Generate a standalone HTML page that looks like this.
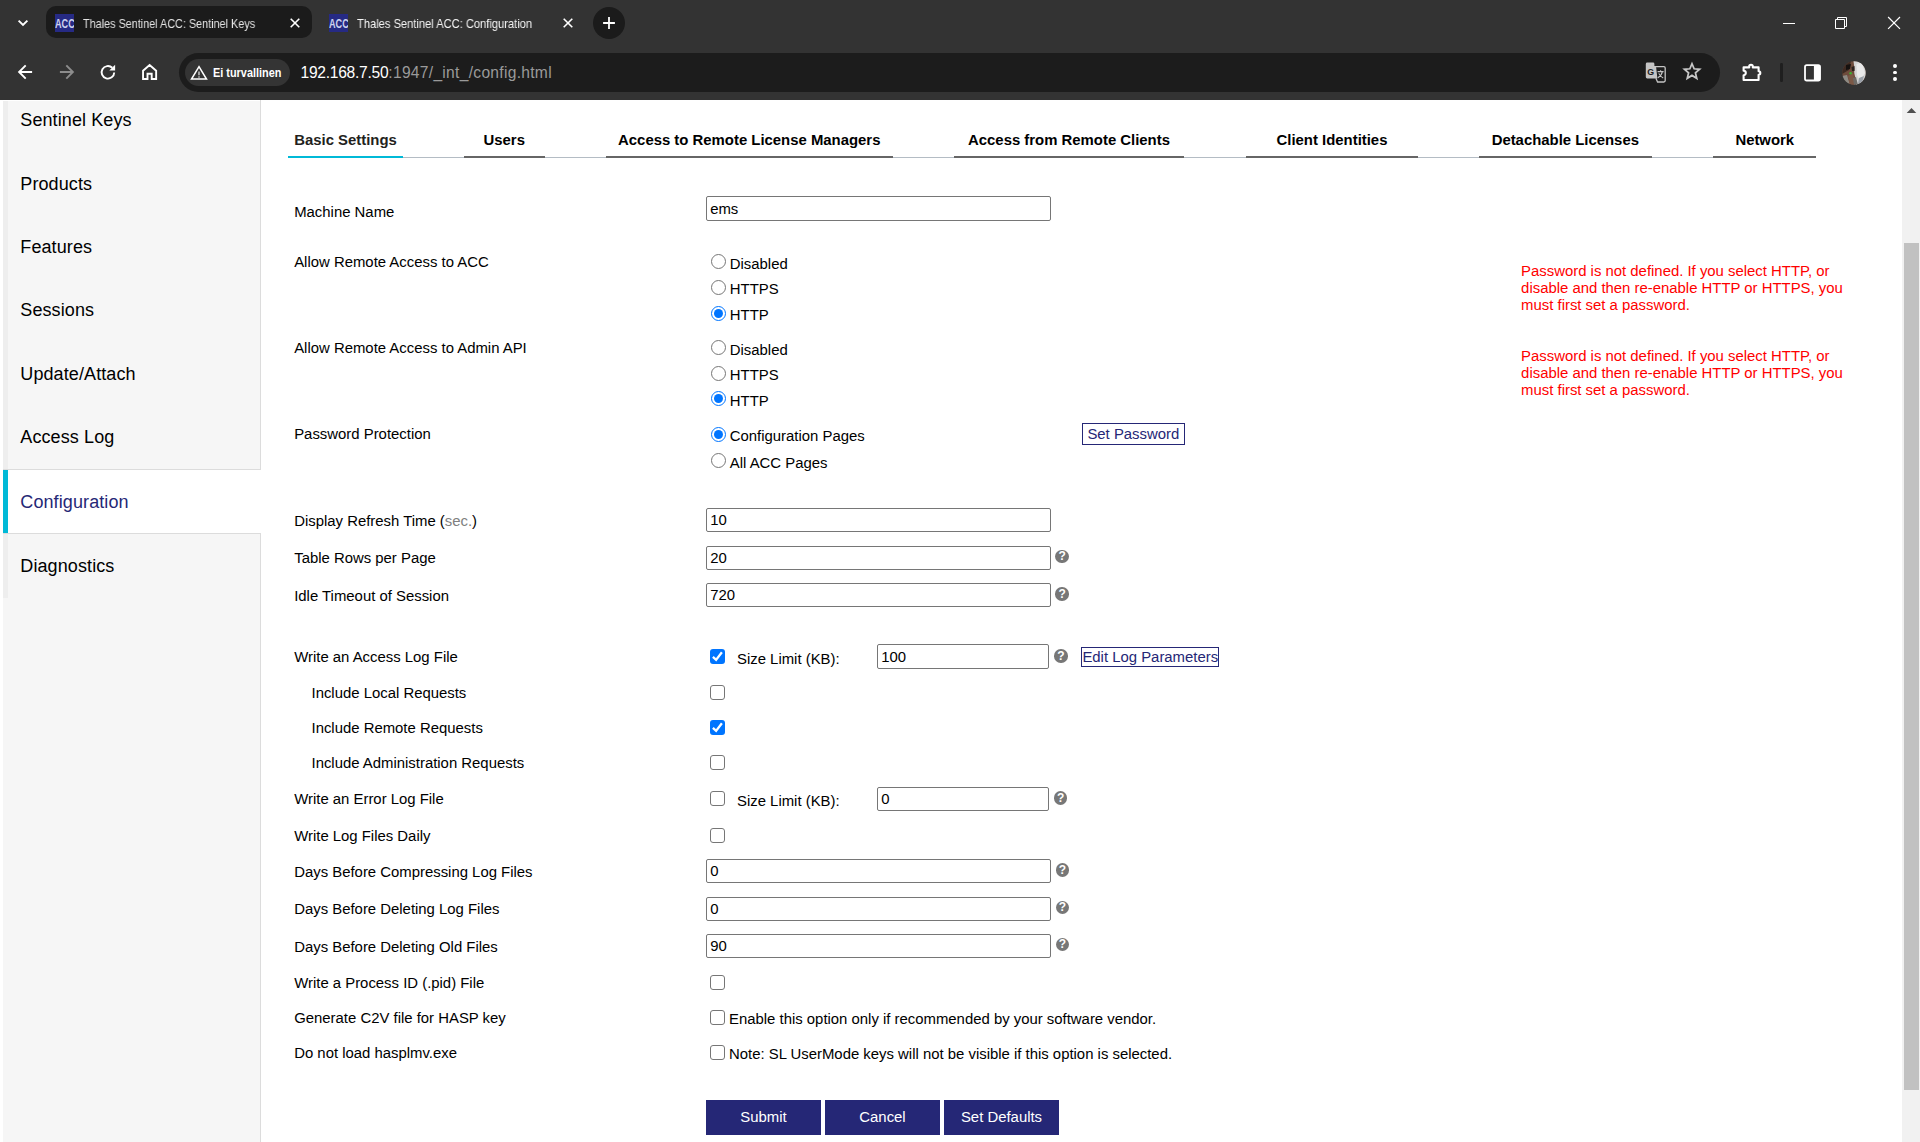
<!DOCTYPE html>
<html lang="en"><head><meta charset="utf-8"><title>Thales Sentinel ACC: Configuration</title>
<style>
html,body{margin:0;padding:0;}
body{width:1920px;height:1142px;overflow:hidden;position:relative;background:#fff;font-family:"Liberation Sans",sans-serif;}
.a{position:absolute;box-sizing:border-box;}
.t{position:absolute;white-space:nowrap;line-height:20px;}
svg{position:absolute;overflow:visible;}
.inp{position:absolute;box-sizing:border-box;border:1px solid #767676;border-radius:2px;background:#fff;}
.cb{position:absolute;box-sizing:border-box;width:15px;height:15px;border:1.3px solid #767676;border-radius:3px;background:#fff;}
.cb.on{border:none;background:#0075ff;}
.rd{position:absolute;box-sizing:border-box;width:15px;height:15px;border:1.3px solid #767676;border-radius:50%;background:#fff;}
.rd.on{border:1.5px solid #0075ff;}
.rd.on::after{content:"";position:absolute;left:50%;top:50%;width:9px;height:9px;margin:-4.5px 0 0 -4.5px;border-radius:50%;background:#0075ff;}
.help{position:absolute;width:13.5px;height:13.5px;border-radius:50%;background:#777;}
.btn{position:absolute;box-sizing:border-box;background:#252776;}
.lbtn{position:absolute;box-sizing:border-box;border:1px solid #252776;background:#fff;}

</style></head>
<body>
<div class="a" style="left:0px;top:0px;width:1920px;height:100px;background:#333333;"></div>
<svg style="left:15px;top:15px" width="16" height="16" viewBox="0 0 16 16"><path d="M3.6 5.6 L8 10 L12.4 5.6" fill="none" stroke="#fff" stroke-width="1.9"/></svg>
<div class="a" style="left:46px;top:6px;width:266px;height:32px;background:#1b1b1b;border-radius:10px;"></div>
<div class="a" style="left:55px;top:14px;width:19px;height:18px;background:#262a84;overflow:hidden;"></div>
<div class="a" style="left:55px;top:14px;width:19px;height:18px;overflow:hidden;"><div class="t" style="left:-0.4px;top:-0.26px;font-size:12px;font-weight:bold;color:#ccd1ee;transform:scaleX(0.76);transform-origin:0 0;">ACC</div></div>
<div class="t " style="left:83.4px;top:13.50px;font-size:13px;color:#e4e4e4;transform:scaleX(0.8326);transform-origin:0 0;will-change:transform;">Thales Sentinel ACC: Sentinel Keys</div>
<svg style="left:286.6px;top:15.2px" width="16" height="16" viewBox="0 0 16 16"><path d="M3.7 3.7 L12.3 12.3 M12.3 3.7 L3.7 12.3" fill="none" stroke="#fff" stroke-width="1.6"/></svg>
<div class="a" style="left:329px;top:14px;width:19px;height:18px;background:#262a84;overflow:hidden;"></div>
<div class="a" style="left:329px;top:14px;width:19px;height:18px;overflow:hidden;"><div class="t" style="left:-0.4px;top:-0.26px;font-size:12px;font-weight:bold;color:#ccd1ee;transform:scaleX(0.76);transform-origin:0 0;">ACC</div></div>
<div class="t " style="left:357.2px;top:13.50px;font-size:13px;color:#f6f6f6;transform:scaleX(0.856);transform-origin:0 0;will-change:transform;">Thales Sentinel ACC: Configuration</div>
<svg style="left:560.2px;top:15.2px" width="16" height="16" viewBox="0 0 16 16"><path d="M3.7 3.7 L12.3 12.3 M12.3 3.7 L3.7 12.3" fill="none" stroke="#fff" stroke-width="1.6"/></svg>
<div class="a" style="left:593px;top:7px;width:32px;height:32px;background:#1b1b1b;border-radius:50%;"></div>
<svg style="left:601px;top:15px" width="16" height="16" viewBox="0 0 16 16"><path d="M2.1 8 H13.9 M8 2.1 V13.9" fill="none" stroke="#fff" stroke-width="1.8"/></svg>
<div class="a" style="left:1783.2px;top:22.5px;width:11.8px;height:1.2px;background:#fff;"></div>
<svg style="left:1833px;top:15px" width="16" height="16" viewBox="0 0 16 16"><path d="M2.5 4.5 H11.5 V13.5 H2.5 Z" fill="none" stroke="#fff" stroke-width="1"/><path d="M4.5 4 V2.5 H13.5 V11.5 H12" fill="none" stroke="#fff" stroke-width="1"/></svg>
<svg style="left:1886px;top:15px" width="16" height="16" viewBox="0 0 16 16"><path d="M2.1 2 L14 13.9 M14 2 L2.1 13.9" fill="none" stroke="#fff" stroke-width="1.2"/></svg>
<svg style="left:15.2px;top:62.400000000000006px" width="20" height="20" viewBox="0 0 20 20"><g><path d="M17.1 10 H4.8 M10.7 3.4 L4.1 10 L10.7 16.6" fill="none" stroke="#fff" stroke-width="1.9"/></g></svg>
<svg style="left:56.7px;top:62.400000000000006px" width="20" height="20" viewBox="0 0 20 20"><g transform="translate(20 0) scale(-1 1)"><path d="M17.1 10 H4.8 M10.7 3.4 L4.1 10 L10.7 16.6" fill="none" stroke="#8c8c8c" stroke-width="1.9"/></g></svg>
<svg style="left:98px;top:62px" width="20" height="20" viewBox="0 0 20 20"><path d="M16.2 10.4 A6.3 6.3 0 1 1 14.3 5.8" fill="none" stroke="#fff" stroke-width="1.9"/><path d="M17.1 2.8 V8.6 H11.3 Z" fill="#fff"/></svg>
<svg style="left:139px;top:62px" width="20" height="20" viewBox="0 0 20 20"><path d="M4.05 17.05 V8.7 L10.6 3.1 L17.15 8.7 V17.05 H12.7 V11.75 H8.5 V17.05 Z" fill="none" stroke="#fff" stroke-width="1.9" stroke-linejoin="miter"/></svg>
<div class="a" style="left:179px;top:53px;width:1541px;height:39px;background:#1c1c1c;border-radius:19.5px;"></div>
<div class="a" style="left:185px;top:59px;width:105.3px;height:27px;background:#343434;border-radius:13.5px;"></div>
<svg style="left:188.6px;top:63px" width="20" height="20" viewBox="0 0 20 20"><path d="M10 3.7 L17.5 16.1 H2.5 Z" fill="none" stroke="#fff" stroke-width="1.5" stroke-linejoin="miter"/><path d="M10 8.4 V12.3" stroke="#fff" stroke-width="1.1"/><circle cx="10" cy="14" r="0.7" fill="#fff"/></svg>
<div class="t " style="left:212.8px;top:62.67px;font-size:12.5px;color:#fff;font-weight:bold;transform:scaleX(0.872);transform-origin:0 0;">Ei turvallinen</div>
<div class="t " style="left:300.5px;top:62.59px;font-size:15.6px;color:#fff;"><span style="letter-spacing:-0.27px">192.168.7.50</span><span style="color:#9a9a9a;letter-spacing:0.29px">:1947/_int_/config.html</span></div>
<svg style="left:1645px;top:62px" width="21" height="21" viewBox="0 0 21 21"><path d="M2.2 0.6 H8 a1.4 1.4 0 0 1 1.4 1.4 V4 H11 L12.4 16.4 H2.2 a1.4 1.4 0 0 1 -1.4 -1.4 V2 a1.4 1.4 0 0 1 1.4 -1.4 Z" fill="#c4c4c4"/><path d="M10.2 4.6 H18.8 a1.4 1.4 0 0 1 1.4 1.4 V18.6 a1.4 1.4 0 0 1 -1.4 1.4 H12.6 L10.9 16.2" fill="none" stroke="#c4c4c4" stroke-width="1.3"/><text x="2.2" y="12.7" font-family="Liberation Sans" font-weight="bold" font-size="8.8" fill="#1c1c1c">G</text><path d="M12.6 9.6 H18.6 M15.6 8.2 V9.6 M17.4 9.6 C16.8 12.4 15.2 14.4 12.8 15.8 M13.8 11.4 C14.6 13.4 16.2 15 18.2 16" fill="none" stroke="#c4c4c4" stroke-width="1.1"/></svg>
<svg style="left:1682.1px;top:61.4px" width="20" height="20" viewBox="0 0 20 20"><path transform="translate(10 10.3) scale(0.93) translate(-10 -10.3)" d="M10 2.2 L12.3 7.6 L18.2 8.1 L13.7 12 L15.1 17.8 L10 14.7 L4.9 17.8 L6.3 12 L1.8 8.1 L7.7 7.6 Z" fill="none" stroke="#c7c7c7" stroke-width="1.9" stroke-linejoin="miter"/></svg>
<svg style="left:1740.5px;top:61.5px" width="21" height="21" viewBox="0 0 21 21"><path d="M2.6 5.4 H8.2 V4.5 a1.8 1.8 0 0 1 3.6 0 V5.4 H17.6 V9.3 a1.7 1.7 0 0 1 0 3.4 V18 H2.6 V13.2 a2.2 2.2 0 0 0 0 -4.4 Z" fill="none" stroke="#fff" stroke-width="2.1" stroke-linejoin="round"/></svg>
<div class="a" style="left:1780px;top:63px;width:2.5px;height:18.6px;background:#1f1f1f;border-radius:1.25px;"></div>
<svg style="left:1802px;top:62.5px" width="20" height="20" viewBox="0 0 20 20"><rect x="3" y="2.15" width="15" height="15.35" rx="1.8" fill="none" stroke="#fff" stroke-width="1.8"/><rect x="11.9" y="2.6" width="6.4" height="14.4" fill="#fff"/></svg>
<svg style="left:1841.5px;top:60.5px" width="24" height="24" viewBox="0 0 24 24"><defs><clipPath id="av"><circle cx="12" cy="12" r="11.7"/></clipPath></defs><g clip-path="url(#av)"><rect width="24" height="24" fill="#6e4c3c"/><path d="M11.5 0 H24 V24 H14 C15.5 18 11 14 12.5 8 Z" fill="#d4d4d4"/><path d="M0 0 H9 L7 9 L0 13 Z" fill="#3d2a22"/><path d="M4 4 L9 3 L8 8 L4 9 Z" fill="#15110f"/><path d="M9.5 6 L12.5 5 L12.5 10 L10 10 Z" fill="#2a211d"/><path d="M0 15 L5 14 L8 24 H0 Z" fill="#8d8a84"/><path d="M6 15 L11 12 L13 24 H8 Z" fill="#7b5846"/><path d="M11 17 L14 16 L16 24 H12 Z" fill="#6c6a66"/><circle cx="8.6" cy="12.2" r="1.3" fill="#3fae2f"/><path d="M14.5 3 L20 1.5 L23 12 L18 20 L15 14 Z" fill="#e9e9e9"/><path d="M17 17 L22 15 L20 22 L16 23 Z" fill="#9aa0a8"/></g></svg>
<div class="a" style="left:1893.1px;top:64.39999999999999px;width:3.8px;height:3.8px;background:#fff;border-radius:50%;"></div>
<div class="a" style="left:1893.1px;top:70.6px;width:3.8px;height:3.8px;background:#fff;border-radius:50%;"></div>
<div class="a" style="left:1893.1px;top:76.8px;width:3.8px;height:3.8px;background:#fff;border-radius:50%;"></div>
<div class="a" style="left:3px;top:101px;width:258px;height:1041px;background:#f6f6f6;border-right:1px solid #dcdcdc;"></div>
<div class="a" style="left:3px;top:101px;width:5px;height:497px;background:#eeeeee;"></div>
<div class="a" style="left:260px;top:100px;width:1px;height:1px;background:#dcdcdc;"></div>
<div class="a" style="left:3px;top:469px;width:258px;height:65px;background:#fff;border-top:1px solid #dcdcdc;border-bottom:1px solid #dcdcdc;"></div>
<div class="a" style="left:3px;top:470px;width:5px;height:63px;background:#00b9d7;"></div>
<div class="t " style="left:20.3px;top:109.76px;font-size:18px;color:#000;letter-spacing:0.1px;">Sentinel Keys</div>
<div class="t " style="left:20.3px;top:173.76px;font-size:18px;color:#000;letter-spacing:0.1px;">Products</div>
<div class="t " style="left:20.3px;top:236.76px;font-size:18px;color:#000;letter-spacing:0.1px;">Features</div>
<div class="t " style="left:20.3px;top:299.76px;font-size:18px;color:#000;letter-spacing:0.1px;">Sessions</div>
<div class="t " style="left:20.3px;top:363.76px;font-size:18px;color:#000;letter-spacing:0.1px;">Update/Attach</div>
<div class="t " style="left:20.3px;top:426.76px;font-size:18px;color:#000;letter-spacing:0.1px;">Access Log</div>
<div class="t " style="left:20.3px;top:491.76px;font-size:18px;color:#252776;letter-spacing:0.1px;">Configuration</div>
<div class="t " style="left:20.3px;top:555.76px;font-size:18px;color:#000;letter-spacing:0.1px;">Diagnostics</div>
<div class="a" style="left:288px;top:157px;width:1528px;height:1px;background:#b4bcc4;"></div>
<div class="a" style="left:288px;top:156px;width:115px;height:2px;background:#00b9d7;"></div>
<div class="t" style="left:145.5px;width:400px;text-align:center;top:129.80px;font-size:14.9px;font-weight:bold;color:#231f20;">Basic Settings</div>
<div class="a" style="left:464px;top:156px;width:81px;height:2px;background:#666666;"></div>
<div class="t" style="left:304.25px;width:400px;text-align:center;top:129.80px;font-size:14.9px;font-weight:bold;color:#000;">Users</div>
<div class="a" style="left:606px;top:156px;width:287px;height:2px;background:#666666;"></div>
<div class="t" style="left:549.25px;width:400px;text-align:center;top:129.80px;font-size:14.9px;font-weight:bold;color:#000;">Access to Remote License Managers</div>
<div class="a" style="left:954px;top:156px;width:230px;height:2px;background:#666666;"></div>
<div class="t" style="left:869.0px;width:400px;text-align:center;top:129.80px;font-size:14.9px;font-weight:bold;color:#000;">Access from Remote Clients</div>
<div class="a" style="left:1246px;top:156px;width:172px;height:2px;background:#666666;"></div>
<div class="t" style="left:1132.0px;width:400px;text-align:center;top:129.80px;font-size:14.9px;font-weight:bold;color:#000;">Client Identities</div>
<div class="a" style="left:1479px;top:156px;width:173px;height:2px;background:#666666;"></div>
<div class="t" style="left:1365.3px;width:400px;text-align:center;top:129.80px;font-size:14.9px;font-weight:bold;color:#000;">Detachable Licenses</div>
<div class="a" style="left:1713px;top:156px;width:103px;height:2px;background:#666666;"></div>
<div class="t" style="left:1564.75px;width:400px;text-align:center;top:129.80px;font-size:14.9px;font-weight:bold;color:#000;">Network</div>
<div class="t " style="left:294.2px;top:201.84px;font-size:14.9px;color:#000;">Machine Name</div>
<div class="inp" style="left:706px;top:196px;width:345px;height:25px;"></div>
<div class="t " style="left:710.2px;top:198.84px;font-size:14.9px;color:#000;">ems</div>
<div class="t " style="left:294.2px;top:251.84px;font-size:14.9px;color:#000;">Allow Remote Access to ACC</div>
<div class="rd" style="left:711px;top:254px;"></div>
<div class="t " style="left:729.8px;top:253.84px;font-size:14.9px;color:#000;">Disabled</div>
<div class="rd" style="left:711px;top:280px;"></div>
<div class="t " style="left:729.8px;top:278.84px;font-size:14.9px;color:#000;">HTTPS</div>
<div class="rd on" style="left:711px;top:305.6px;"></div>
<div class="t " style="left:729.8px;top:304.84px;font-size:14.9px;color:#000;">HTTP</div>
<div class="t " style="left:294.2px;top:337.84px;font-size:14.9px;color:#000;">Allow Remote Access to Admin API</div>
<div class="rd" style="left:711px;top:340px;"></div>
<div class="t " style="left:729.8px;top:339.84px;font-size:14.9px;color:#000;">Disabled</div>
<div class="rd" style="left:711px;top:366px;"></div>
<div class="t " style="left:729.8px;top:364.84px;font-size:14.9px;color:#000;">HTTPS</div>
<div class="rd on" style="left:711px;top:391px;"></div>
<div class="t " style="left:729.8px;top:390.84px;font-size:14.9px;color:#000;">HTTP</div>
<div class="t " style="left:294.2px;top:423.84px;font-size:14.9px;color:#000;">Password Protection</div>
<div class="rd on" style="left:711px;top:427px;"></div>
<div class="t " style="left:729.8px;top:425.84px;font-size:14.9px;color:#000;">Configuration Pages</div>
<div class="rd" style="left:711px;top:453px;"></div>
<div class="t " style="left:729.8px;top:452.84px;font-size:14.9px;color:#000;">All ACC Pages</div>
<div class="lbtn" style="left:1082px;top:423px;width:103px;height:22px;"></div>
<div class="t " style="left:1087.4px;top:423.84px;font-size:14.9px;color:#252776;">Set Password</div>
<div class="t " style="left:1521.1px;top:260.84px;font-size:14.9px;color:#ff0000;">Password is not defined. If you select HTTP, or</div>
<div class="t " style="left:1521.1px;top:277.84px;font-size:14.9px;color:#ff0000;">disable and then re-enable HTTP or HTTPS, you</div>
<div class="t " style="left:1521.1px;top:294.84px;font-size:14.9px;color:#ff0000;">must first set a password.</div>
<div class="t " style="left:1521.1px;top:345.84px;font-size:14.9px;color:#ff0000;">Password is not defined. If you select HTTP, or</div>
<div class="t " style="left:1521.1px;top:362.84px;font-size:14.9px;color:#ff0000;">disable and then re-enable HTTP or HTTPS, you</div>
<div class="t " style="left:1521.1px;top:379.84px;font-size:14.9px;color:#ff0000;">must first set a password.</div>
<div class="t " style="left:294.2px;top:510.84px;font-size:14.9px;color:#000;">Display Refresh Time (<span style="color:#808080">sec.</span>)</div>
<div class="inp" style="left:706px;top:508px;width:345px;height:24px;"></div>
<div class="t " style="left:710.2px;top:509.84px;font-size:14.9px;color:#000;">10</div>
<div class="t " style="left:294.2px;top:547.84px;font-size:14.9px;color:#000;">Table Rows per Page</div>
<div class="inp" style="left:706px;top:546px;width:345px;height:24px;"></div>
<div class="t " style="left:710.2px;top:547.84px;font-size:14.9px;color:#000;">20</div>
<div class="help" style="left:1055.45px;top:549.95px;"><div class="t" style="left:0;width:13.5px;text-align:center;top:-3.5px;font-size:12px;font-weight:bold;color:#fff;">?</div></div>
<div class="t " style="left:294.2px;top:585.84px;font-size:14.9px;color:#000;">Idle Timeout of Session</div>
<div class="inp" style="left:706px;top:583px;width:345px;height:24px;"></div>
<div class="t " style="left:710.2px;top:584.84px;font-size:14.9px;color:#000;">720</div>
<div class="help" style="left:1055.45px;top:587.1500000000001px;"><div class="t" style="left:0;width:13.5px;text-align:center;top:-3.5px;font-size:12px;font-weight:bold;color:#fff;">?</div></div>
<div class="t " style="left:294.2px;top:646.84px;font-size:14.9px;color:#000;">Write an Access Log File</div>
<div class="cb on" style="left:710px;top:649px;"><svg style="left:0;top:0" width="15" height="15" viewBox="0 0 15 15"><path d="M2.9 7.9 L6.1 10.9 L11.9 3.2" fill="none" stroke="#fff" stroke-width="2.3"/></svg></div>
<div class="t " style="left:737px;top:648.84px;font-size:14.9px;color:#000;">Size Limit (KB):</div>
<div class="inp" style="left:877px;top:644px;width:172px;height:25px;"></div>
<div class="t " style="left:881.2px;top:646.84px;font-size:14.9px;color:#000;">100</div>
<div class="help" style="left:1054.15px;top:649.1500000000001px;"><div class="t" style="left:0;width:13.5px;text-align:center;top:-3.5px;font-size:12px;font-weight:bold;color:#fff;">?</div></div>
<div class="lbtn" style="left:1081px;top:647px;width:138px;height:20px;"></div>
<div class="t " style="left:1082.4px;top:646.84px;font-size:14.9px;color:#252776;">Edit Log Parameters</div>
<div class="t " style="left:311.5px;top:682.84px;font-size:14.9px;color:#000;">Include Local Requests</div>
<div class="cb" style="left:710px;top:685px;"></div>
<div class="t " style="left:311.5px;top:717.84px;font-size:14.9px;color:#000;">Include Remote Requests</div>
<div class="cb on" style="left:710px;top:720px;"><svg style="left:0;top:0" width="15" height="15" viewBox="0 0 15 15"><path d="M2.9 7.9 L6.1 10.9 L11.9 3.2" fill="none" stroke="#fff" stroke-width="2.3"/></svg></div>
<div class="t " style="left:311.5px;top:752.84px;font-size:14.9px;color:#000;">Include Administration Requests</div>
<div class="cb" style="left:710px;top:755px;"></div>
<div class="t " style="left:294.2px;top:788.84px;font-size:14.9px;color:#000;">Write an Error Log File</div>
<div class="cb" style="left:710px;top:791px;"></div>
<div class="t " style="left:737px;top:790.84px;font-size:14.9px;color:#000;">Size Limit (KB):</div>
<div class="inp" style="left:877px;top:787px;width:172px;height:24px;"></div>
<div class="t " style="left:881.2px;top:788.84px;font-size:14.9px;color:#000;">0</div>
<div class="help" style="left:1053.95px;top:791.0500000000001px;"><div class="t" style="left:0;width:13.5px;text-align:center;top:-3.5px;font-size:12px;font-weight:bold;color:#fff;">?</div></div>
<div class="t " style="left:294.2px;top:825.84px;font-size:14.9px;color:#000;">Write Log Files Daily</div>
<div class="cb" style="left:710px;top:828px;"></div>
<div class="t " style="left:294.2px;top:861.84px;font-size:14.9px;color:#000;">Days Before Compressing Log Files</div>
<div class="inp" style="left:706px;top:859px;width:345px;height:24px;"></div>
<div class="t " style="left:710.2px;top:860.84px;font-size:14.9px;color:#000;">0</div>
<div class="help" style="left:1055.55px;top:863.0500000000001px;"><div class="t" style="left:0;width:13.5px;text-align:center;top:-3.5px;font-size:12px;font-weight:bold;color:#fff;">?</div></div>
<div class="t " style="left:294.2px;top:898.84px;font-size:14.9px;color:#000;">Days Before Deleting Log Files</div>
<div class="inp" style="left:706px;top:897px;width:345px;height:24px;"></div>
<div class="t " style="left:710.2px;top:898.84px;font-size:14.9px;color:#000;">0</div>
<div class="help" style="left:1055.55px;top:900.85px;"><div class="t" style="left:0;width:13.5px;text-align:center;top:-3.5px;font-size:12px;font-weight:bold;color:#fff;">?</div></div>
<div class="t " style="left:294.2px;top:936.84px;font-size:14.9px;color:#000;">Days Before Deleting Old Files</div>
<div class="inp" style="left:706px;top:934px;width:345px;height:24px;"></div>
<div class="t " style="left:710.2px;top:935.84px;font-size:14.9px;color:#000;">90</div>
<div class="help" style="left:1055.55px;top:937.75px;"><div class="t" style="left:0;width:13.5px;text-align:center;top:-3.5px;font-size:12px;font-weight:bold;color:#fff;">?</div></div>
<div class="t " style="left:294.2px;top:972.84px;font-size:14.9px;color:#000;">Write a Process ID (.pid) File</div>
<div class="cb" style="left:710px;top:975px;"></div>
<div class="t " style="left:294.2px;top:1007.84px;font-size:14.9px;color:#000;">Generate C2V file for HASP key</div>
<div class="cb" style="left:710px;top:1010px;"></div>
<div class="t " style="left:729px;top:1008.84px;font-size:14.9px;color:#000;">Enable this option only if recommended by your software vendor.</div>
<div class="t " style="left:294.2px;top:1042.84px;font-size:14.9px;color:#000;">Do not load hasplmv.exe</div>
<div class="cb" style="left:710px;top:1045px;"></div>
<div class="t " style="left:729px;top:1043.84px;font-size:14.9px;color:#000;">Note: SL UserMode keys will not be visible if this option is selected.</div>
<div class="btn" style="left:706px;top:1100px;width:115px;height:34.5px;"></div>
<div class="t" style="left:706px;width:115px;text-align:center;top:1106.80px;font-size:14.9px;color:#fff;">Submit</div>
<div class="btn" style="left:825px;top:1100px;width:115px;height:34.5px;"></div>
<div class="t" style="left:825px;width:115px;text-align:center;top:1106.80px;font-size:14.9px;color:#fff;">Cancel</div>
<div class="btn" style="left:944px;top:1100px;width:115px;height:34.5px;"></div>
<div class="t" style="left:944px;width:115px;text-align:center;top:1106.80px;font-size:14.9px;color:#fff;">Set Defaults</div>
<div class="a" style="left:1902px;top:100px;width:18px;height:1042px;background:#f1f1f1;"></div>
<div class="a" style="left:1904px;top:243px;width:15px;height:847px;background:#c1c1c1;"></div>
<svg style="left:1902px;top:100px" width="18" height="18" viewBox="0 0 18 18"><path d="M4.7 13 L9.5 8 L14.3 13 Z" fill="#505050"/></svg>
</body></html>
